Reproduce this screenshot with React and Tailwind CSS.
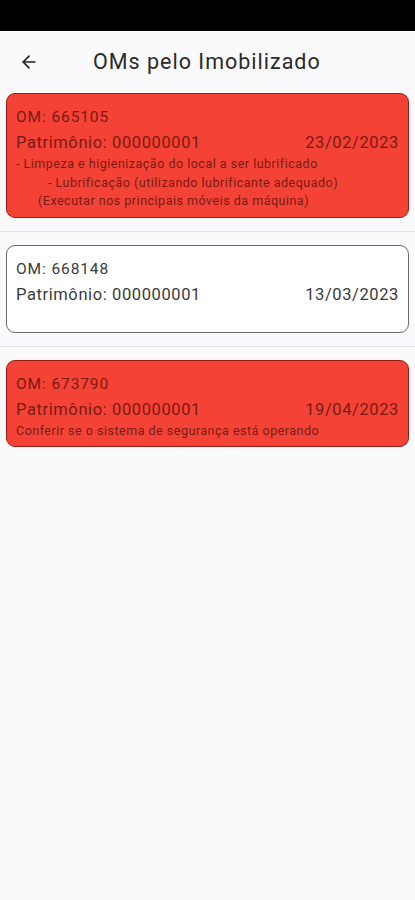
import { ArrowLeft } from 'lucide-react';

const orders = [
  {
    om: '665105',
    patrimonio: '000000001',
    date: '23/02/2023',
    late: true,
    notes: [
      { text: '- Limpeza e higienização do local a ser lubrificado', indent: '' },
      { text: '- Lubrificação (utilizando lubrificante adequado)', indent: 'pl-[32px]' },
      { text: '(Executar nos principais móveis da máquina)', indent: 'pl-[22px]' },
    ],
  },
  { om: '668148', patrimonio: '000000001', date: '13/03/2023', late: false, notes: [] },
  {
    om: '673790',
    patrimonio: '000000001',
    date: '19/04/2023',
    late: true,
    notes: [{ text: 'Conferir se o sistema de segurança está operando', indent: '' }],
  },
];

function OrderCard({ order }) {
  const cardClass = order.late
    ? 'bg-[#f44336] border-[#9b1c14] text-[#7a1a12]'
    : 'bg-white border-[#6b6b6b] text-[#3a3a3a] min-h-[88px]';

  return (
    <div className={`mx-[6px] rounded-[9px] border px-[9px] pt-[12px] pb-[6px] ${cardClass}`}>
      <div className="text-[15.5px] leading-[22px] tracking-[0.9px]">OM: {order.om}</div>
      <div className="flex justify-between items-baseline mt-[4px] text-[16.5px] leading-[22px] tracking-[0.6px]">
        <span>Patrimônio: {order.patrimonio}</span>
        <span>{order.date}</span>
      </div>
      {order.notes.length > 0 && (
        <div className="mt-[1px] text-[12.5px] leading-[18.5px] tracking-[0.5px]">
          {order.notes.map((n, i) => (
            <div key={i} className={n.indent}>{n.text}</div>
          ))}
        </div>
      )}
    </div>
  );
}

export default function App() {
  return (
    <div className="min-h-[900px] bg-[#fafafc] font-['Roboto',sans-serif]">
      <div className="h-[31px] bg-black" />
      <header className="h-[62px] bg-[#fafafc] flex items-center">
        <button className="w-[58px] flex justify-center text-[#222]">
          <ArrowLeft size={20} strokeWidth={2} />
        </button>
        <h1 className="ml-[35px] text-[21.5px] text-[#2a2a2a] tracking-[1px]">OMs pelo Imobilizado</h1>
      </header>
      <div className="flex flex-col">
        {orders.map((o, i) => (
          <div key={o.om}>
            <OrderCard order={o} />
            {i < orders.length - 1 && <div className="h-px bg-[#e2e2e6] mt-[13px] mb-[13px]" />}
          </div>
        ))}
      </div>
    </div>
  );
}
